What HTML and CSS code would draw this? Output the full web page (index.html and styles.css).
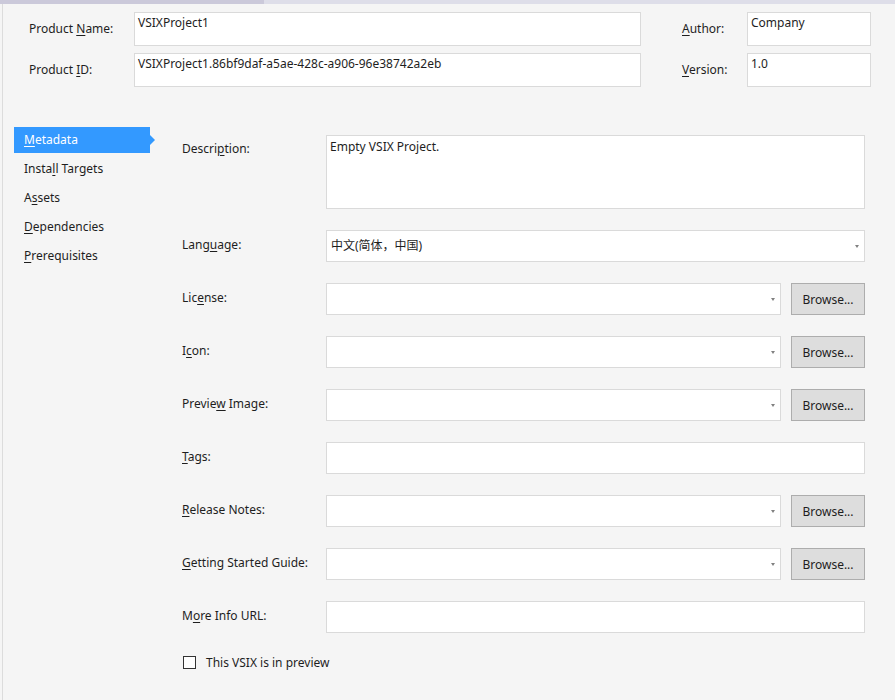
FILE: index.html
```html
<!DOCTYPE html>
<html>
<head>
<meta charset="utf-8">
<link rel="stylesheet" href="styles.css">
</head>
<body>
<div class="tabstrip"><div class="tab-active"></div><div class="tab-rest"></div></div>
<div class="page">
  <div class="header">
    <div class="hlabel">Product <u>N</u>ame:</div>
    <div class="box">VSIXProject1</div>
    <div class="hlabel right"><u>A</u>uthor:</div>
    <div class="box">Company</div>
    <div class="hlabel">Product <u>I</u>D:</div>
    <div class="box">VSIXProject1.86bf9daf-a5ae-428c-a906-96e38742a2eb</div>
    <div class="hlabel right"><u>V</u>ersion:</div>
    <div class="box">1.0</div>
  </div>
  <div class="body">
    <nav class="nav">
      <div class="nav-item active"><u>M</u>etadata</div>
      <div class="nav-item">Insta<u>l</u>l Targets</div>
      <div class="nav-item">A<u>s</u>sets</div>
      <div class="nav-item"><u>D</u>ependencies</div>
      <div class="nav-item"><u>P</u>rerequisites</div>
    </nav>
    <div class="form">
      <div class="row row-desc">
        <div class="flabel">Descri<u>p</u>tion:</div>
        <div class="box desc">Empty VSIX Project.</div>
      </div>
      <div class="row">
        <div class="flabel">Lang<u>u</u>age:</div>
        <div class="box combo full"><span class="ctext">中文(简体，中国)</span><span class="arrow"></span></div>
      </div>
      <div class="row">
        <div class="flabel">Lic<u>e</u>nse:</div>
        <div class="box combo"><span class="ctext"></span><span class="arrow"></span></div>
        <div class="btn">Browse...</div>
      </div>
      <div class="row">
        <div class="flabel">I<u>c</u>on:</div>
        <div class="box combo"><span class="ctext"></span><span class="arrow"></span></div>
        <div class="btn">Browse...</div>
      </div>
      <div class="row">
        <div class="flabel">Previe<u>w</u> Image:</div>
        <div class="box combo"><span class="ctext"></span><span class="arrow"></span></div>
        <div class="btn">Browse...</div>
      </div>
      <div class="row">
        <div class="flabel"><u>T</u>ags:</div>
        <div class="box full"></div>
      </div>
      <div class="row">
        <div class="flabel"><u>R</u>elease Notes:</div>
        <div class="box combo"><span class="ctext"></span><span class="arrow"></span></div>
        <div class="btn">Browse...</div>
      </div>
      <div class="row">
        <div class="flabel"><u>G</u>etting Started Guide:</div>
        <div class="box combo"><span class="ctext"></span><span class="arrow"></span></div>
        <div class="btn">Browse...</div>
      </div>
      <div class="row">
        <div class="flabel">M<u>o</u>re Info URL:</div>
        <div class="box full"></div>
      </div>
      <div class="check-row">
        <span class="checkbox"></span>
        <span class="check-label">This VSIX is in preview</span>
      </div>
    </div>
  </div>
</div>
</body>
</html>
```

FILE: styles.css
```css
html, body {
  margin: 0;
  padding: 0;
  background: #f5f5f5;
  width: 895px;
  height: 700px;
  overflow: hidden;
  font-family: "Noto Sans", "Noto Sans CJK SC", sans-serif;
  font-size: 12px;
  color: #1e1e1e;
}
u { text-decoration: underline; text-underline-offset: 2px; }
.tabstrip {
  display: flex;
  height: 4px;
}
.tab-active { width: 264px; background: #cbc9da; }
.tab-rest { flex: 1; background: #dedee9; }
.page {
  border-left: 1px solid #dcdcdc;
  margin-left: 2px;
  height: 696px;
  box-sizing: border-box;
}
.header {
  display: grid;
  grid-template-columns: 105px 507px 106px 124px;
  grid-auto-rows: 34px;
  row-gap: 7px;
  padding: 8px 0 0 26px;
}
.hlabel {
  line-height: 33px;
  white-space: nowrap;
}
.hlabel.right { padding-left: 41px; }
.box {
  background: #fff;
  border: 1px solid #dadada;
  box-sizing: border-box;
  padding: 1px 3px;
  line-height: 18px;
  white-space: nowrap;
  overflow: hidden;
}
.body {
  display: flex;
  padding-top: 40px;
}
.nav {
  width: 179px;
  flex: none;
  padding-left: 11px;
  box-sizing: border-box;
  display: flex;
  flex-direction: column;
  gap: 3px;
}
.nav-item {
  position: relative;
  width: 136px;
  height: 26px;
  line-height: 26px;
  padding-left: 10px;
  box-sizing: border-box;
}
.nav-item.active {
  background: #3399ff;
  color: #fff;
}
.nav-item.active::after {
  content: "";
  position: absolute;
  right: -5px;
  top: 8px;
  border-top: 5px solid transparent;
  border-bottom: 5px solid transparent;
  border-left: 5px solid #3399ff;
}
.form {
  padding-top: 8px;
  display: flex;
  flex-direction: column;
  gap: 21px;
}
.row {
  display: flex;
  align-items: center;
  height: 32px;
}
.row-desc {
  height: 74px;
  align-items: flex-start;
}
.row .flabel { padding-bottom: 4px; }
.row-desc .flabel { padding-top: 5px; padding-bottom: 0; }
.flabel {
  width: 144px;
  flex: none;
  white-space: nowrap;
}
.desc {
  width: 539px;
  height: 74px;
  padding-top: 2px;
}
.full { width: 539px; height: 32px; }
.combo {
  width: 455px;
  height: 32px;
  display: flex;
  align-items: center;
  padding: 0 4px 0 4px;
}
.combo.full { width: 539px; }
.ctext { flex: 1; }
.arrow {
  width: 0;
  height: 0;
  border-left: 2px solid transparent;
  border-right: 2px solid transparent;
  border-top: 3px solid #808080;
  margin-right: 1px;
  margin-top: 1px;
}
.btn {
  margin-left: 10px;
  width: 74px;
  height: 32px;
  box-sizing: border-box;
  background: #dddddd;
  border: 1px solid #adadad;
  display: flex;
  align-items: center;
  justify-content: center;
}
.check-row {
  display: flex;
  align-items: center;
  gap: 10px;
  padding-left: 1px;
}
.checkbox {
  width: 13px;
  height: 13px;
  box-sizing: border-box;
  border: 1px solid #333;
  background: #fff;
}
```
